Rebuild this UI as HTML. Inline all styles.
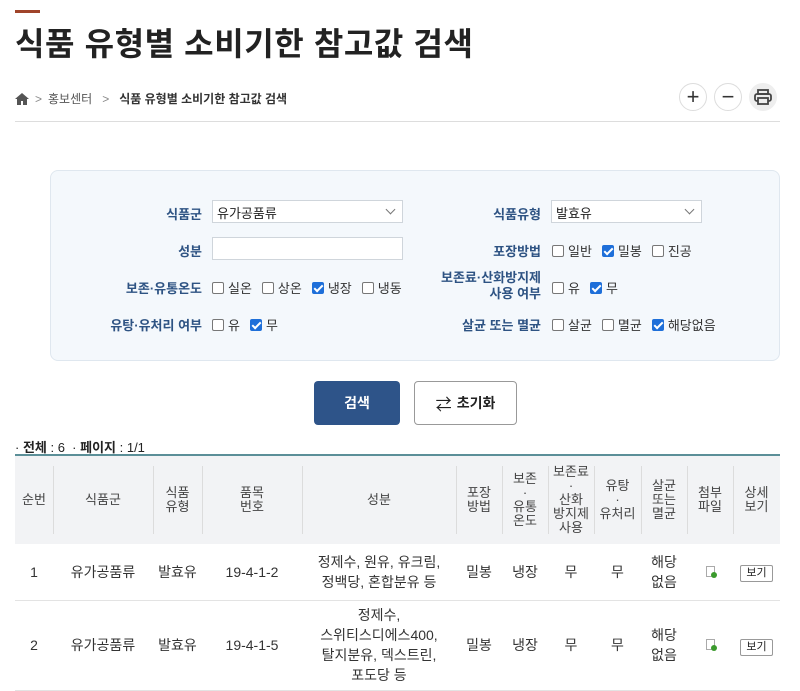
<!DOCTYPE html>
<html><head><meta charset="utf-8"><style>
*{box-sizing:border-box;margin:0;padding:0}
body{width:800px;height:686px;overflow:hidden;background:#fff;font-family:"Liberation Sans","Noto Sans CJK KR",sans-serif;color:#333;position:relative}
.a{position:absolute}
.bar{left:15px;top:10px;width:25px;height:3px;background:#a0442a}
h1{position:absolute;left:15px;top:19px;font-size:32px;font-weight:bold;color:#222;letter-spacing:0.6px}
.bc{left:15px;top:90px;font-size:12px;color:#555;display:flex;align-items:center;gap:6px}
.circ{width:28px;height:28px;border-radius:50%;border:1px solid #ddd;top:83px;display:flex;align-items:center;justify-content:center;font-size:22px;color:#333;background:#fff}
.hr{left:15px;top:121px;width:765px;height:1px;background:#ddd}
.box{left:50px;top:170px;width:730px;height:191px;background:#f4f8fc;border:1px solid #dfe7ef;border-radius:8px}
.lb{font-size:13px;font-weight:bold;color:#2e5383;text-align:right;width:150px}
.sel{background:#fff;border:1px solid #cfd5db;height:23px;font-size:13px;padding:2px 4px;color:#222}
.sel.dd:after{content:"";position:absolute;right:8px;top:5px;width:6px;height:6px;border-right:1.5px solid #777;border-bottom:1.5px solid #777;transform:rotate(45deg)}
.cb{font-size:13px;color:#333;display:flex;align-items:center;gap:4px}
.k{display:inline-block;width:12px;height:12px;border:1px solid #777;border-radius:2px;background:#fff;margin-left:6px}
.k:first-child{margin-left:0}
.k.on{background:#1e6fd9;border-color:#1e6fd9;position:relative}
.k.on:after{content:"";position:absolute;left:3px;top:0px;width:3px;height:7px;border-right:2px solid #fff;border-bottom:2px solid #fff;transform:rotate(45deg)}
.btn{top:381px;height:44px;border-radius:4px;font-size:14px;font-weight:bold;display:flex;align-items:center;justify-content:center}
table{position:absolute;left:15px;top:454px;width:765px;border-collapse:collapse;border-top:2px solid #5b8f98;table-layout:fixed}
th{background:#f2f3f5;font-weight:normal;font-size:13px;color:#444;line-height:14px;height:89px;position:relative}
th+th:before{content:"";position:absolute;left:0;top:10px;bottom:10px;width:1px;background:#dcdcdc}
td{text-align:center;font-size:14px;color:#333;border-bottom:1px solid #e3e3e3;line-height:20px}
.view{display:inline-block;border:1px solid #999;border-radius:2px;font-size:11px;padding:0 5px;line-height:15px;background:#fff;color:#222}
.fi{display:inline-block;width:9px;height:11px;border:1px solid #aaa;position:relative;background:#fff}
.fi:after{content:"";position:absolute;right:-3px;bottom:-2px;width:6px;height:6px;border-radius:50%;background:#3a9a2c}
</style></head><body>
<div class="a bar"></div>
<h1>식품 유형별 소비기한 참고값 검색</h1>
<div class="a bc"><svg width="14" height="12" viewBox="0 0 14 12"><path d="M7 0L0 6h2v6h4V8h2v4h4V6h2z" fill="#555"/></svg><span style="color:#888">&gt;</span><span>홍보센터</span><span style="color:#888;margin-left:4px">&gt;</span><b style="color:#333;margin-left:4px">식품 유형별 소비기한 참고값 검색</b></div>
<div class="a circ" style="left:679px">+</div>
<div class="a circ" style="left:714px">−</div>
<div class="a circ" style="left:749px;background:#eee;border-color:#eee"><svg width="18" height="16" viewBox="0 0 18 16"><rect x="4" y="1" width="10" height="4" fill="none" stroke="#444" stroke-width="1.8"/><rect x="1" y="5" width="16" height="7" rx="2" fill="none" stroke="#444" stroke-width="1.8"/><rect x="4" y="9" width="10" height="6" fill="#eee" stroke="#444" stroke-width="1.8"/></svg></div>
<div class="a hr"></div>
<div class="a box"></div>
<div class="a lb" style="left:52px;top:204px">식품군</div>
<div class="a sel dd" style="left:212px;top:200px;width:191px">유가공품류</div>
<div class="a lb" style="left:391px;top:204px">식품유형</div>
<div class="a sel dd" style="left:551px;top:200px;width:151px">발효유</div>
<div class="a lb" style="left:52px;top:241px">성분</div>
<div class="a sel" style="left:212px;top:237px;width:191px"></div>
<div class="a lb" style="left:391px;top:241px">포장방법</div>
<div class="a cb" style="left:552px;top:241px"><i class="k"></i>일반<i class="k on"></i>밀봉<i class="k"></i>진공</div>
<div class="a lb" style="left:52px;top:278px">보존·유통온도</div>
<div class="a cb" style="left:212px;top:278px"><i class="k"></i>실온<i class="k"></i>상온<i class="k on"></i>냉장<i class="k"></i>냉동</div>
<div class="a lb" style="left:391px;top:270px;line-height:16px">보존료·산화방지제<br>사용 여부</div>
<div class="a cb" style="left:552px;top:278px"><i class="k"></i>유<i class="k on"></i>무</div>
<div class="a lb" style="left:52px;top:315px">유탕·유처리 여부</div>
<div class="a cb" style="left:212px;top:315px"><i class="k"></i>유<i class="k on"></i>무</div>
<div class="a lb" style="left:391px;top:315px">살균 또는 멸균</div>
<div class="a cb" style="left:552px;top:315px"><i class="k"></i>살균<i class="k"></i>멸균<i class="k on"></i>해당없음</div>
<div class="a btn" style="left:314px;width:86px;background:#2e5489;color:#fff">검색</div>
<div class="a btn" style="left:414px;width:103px;border:1px solid #999;color:#222;gap:5px"><span style="font-size:16px;font-weight:normal">⇄</span>초기화</div>
<div class="a" style="left:15px;top:437px;font-size:13px;color:#222">· <b>전체</b> : 6 &nbsp;· <b>페이지</b> : 1/1</div>
<table>
<colgroup><col style="width:38px"><col style="width:100px"><col style="width:49px"><col style="width:100px"><col style="width:154px"><col style="width:46px"><col style="width:46px"><col style="width:46px"><col style="width:47px"><col style="width:46px"><col style="width:46px"><col style="width:47px"></colgroup>
<tr><th>순번</th><th>식품군</th><th>식품<br>유형</th><th>품목<br>번호</th><th>성분</th><th>포장<br>방법</th><th>보존<br>·<br>유통<br>온도</th><th>보존료<br>·<br>산화<br>방지제<br>사용</th><th>유탕<br>·<br>유처리</th><th>살균<br>또는<br>멸균</th><th>첨부<br>파일</th><th>상세<br>보기</th></tr>
<tr style="height:56px"><td>1</td><td>유가공품류</td><td>발효유</td><td>19-4-1-2</td><td>정제수, 원유, 유크림,<br>정백당, 혼합분유 등</td><td>밀봉</td><td>냉장</td><td>무</td><td>무</td><td>해당<br>없음</td><td><i class="fi"></i></td><td><span class="view">보기</span></td></tr>
<tr style="height:90px"><td>2</td><td>유가공품류</td><td>발효유</td><td>19-4-1-5</td><td>정제수,<br>스위티스디에스400,<br>탈지분유, 덱스트린,<br>포도당 등</td><td>밀봉</td><td>냉장</td><td>무</td><td>무</td><td>해당<br>없음</td><td><i class="fi"></i></td><td><span class="view">보기</span></td></tr>
</table>
</body></html>
